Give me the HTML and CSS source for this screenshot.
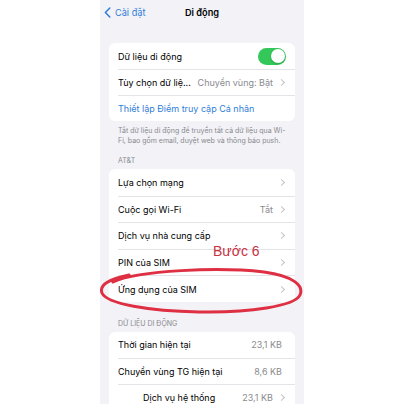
FILE: index.html
```html
<!DOCTYPE html>
<html lang="vi">
<head>
    <meta charset="UTF-8">
    <meta name="viewport" content="width=device-width, initial-scale=1.0">
    <title>Di động</title>
    <link rel="stylesheet" href="styles.css">
</head>
<body>

<div class="phone">
    <div class="nav">
        <div class="back">
            <svg width="7" height="11" viewBox="0 0 7 11"><path d="M5.8 1 L1.4 5.5 L5.8 10" fill="none" stroke="#2f7ed8" stroke-width="1.5" stroke-linecap="round" stroke-linejoin="round"/></svg>
            <span>Cài đặt</span>
        </div>
        <div class="title">Di động</div>
    </div>

    <div class="card first">
        <div class="row">
            <span class="label">Dữ liệu di động</span>
            <span class="toggle"><span class="knob"></span></span>
        </div>
        <div class="row">
            <span class="label">Tùy chọn dữ liệ...</span>
            <span class="value">Chuyển vùng: Bật</span>
            <span class="chev"></span>
        </div>
        <div class="row">
            <span class="label link">Thiết lập Điểm truy cập Cá nhân</span>
        </div>
    </div>
    <p class="footer">Tắt dữ liệu di động để truyền tất cả dữ liệu qua Wi-Fi, bao gồm email, duyệt web và thông báo push.</p>

    <div class="header">AT&amp;T</div>
    <div class="card tall">
        <div class="row">
            <span class="label">Lựa chọn mạng</span>
            <span class="chev"></span>
        </div>
        <div class="row">
            <span class="label">Cuộc gọi Wi-Fi</span>
            <span class="value">Tắt</span>
            <span class="chev"></span>
        </div>
        <div class="row">
            <span class="label">Dịch vụ nhà cung cấp</span>
            <span class="chev"></span>
        </div>
        <div class="row">
            <span class="label">PIN của SIM</span>
            <span class="chev"></span>
        </div>
        <div class="row">
            <span class="label">Ứng dụng của SIM</span>
            <span class="chev"></span>
        </div>
    </div>

    <div class="header second">DỮ LIỆU DI ĐỘNG</div>
    <div class="card">
        <div class="row">
            <span class="label">Thời gian hiện tại</span>
            <span class="value plain">23,1 KB</span>
        </div>
        <div class="row">
            <span class="label">Chuyển vùng TG hiện tại</span>
            <span class="value plain">8,6 KB</span>
        </div>
        <div class="row">
            <span class="label indent">Dịch vụ hệ thống</span>
            <span class="value">23,1 KB</span>
            <span class="chev"></span>
        </div>
    </div>

    <!-- chú thích vẽ tay -->
    <div class="note">Bước 6</div>
    <svg class="circle" width="206" height="50" viewBox="0 0 206 50">
        <path d="M14 16 C40 4 120 1 165 6 C195 10 205 20 201 29 C196 40 150 47 100 46 C50 45 8 38 3 27 C0 19 10 13 30 9" fill="none" stroke="#de2f43" stroke-width="3" stroke-linecap="round"/>
    </svg>
</div>

</body>
</html>
```

FILE: styles.css
```css
/* Màn hình cài đặt di động */
body {
    margin: 0;
    background-color: #fff;
    font-family: Inter, "Liberation Sans", sans-serif;
    color: #000;
}
.phone {
    position: relative;
    width: 204px;
    height: 404px;
    margin: 0 auto;
    background-color: #f2f2f7;
    overflow: hidden;
}
.nav {
    position: relative;
    height: 24px;
    display: flex;
    align-items: center;
    justify-content: center;
    margin-bottom: 19px;
}
.back {
    position: absolute;
    left: 4px;
    top: 0;
    height: 24px;
    display: flex;
    align-items: center;
    gap: 4px;
    color: #2f7ed8;
    font-size: 9.2px;
}
.title {
    font-size: 9.2px;
    font-weight: 600;
}
.card {
    margin: 0 9px;
    background-color: #fff;
    border-radius: 6px;
}
.row {
    height: 26px;
    display: flex;
    align-items: center;
    margin-left: 9px;
    padding-right: 9px;
    border-top: 0.6px solid #e3e3e8;
    box-sizing: border-box;
    font-size: 9px;
}
.row:first-child {
    border-top: none;
}
.tall .row {
    height: 26.6px;
}
.label {
    flex: 1;
    white-space: nowrap;
}
.label.link {
    color: #2f7ed8;
}
.label.indent {
    padding-left: 25px;
}
.value {
    color: #8a8a8e;
    margin-right: 6px;
}
.value.plain {
    margin-right: 4px;
}
.chev {
    width: 4px;
    height: 4px;
    border-top: 1px solid #c4c4c8;
    border-right: 1px solid #c4c4c8;
    transform: rotate(45deg);
    margin-right: 2px;
}
.toggle {
    width: 28px;
    height: 17px;
    border-radius: 9px;
    background-color: #34c759;
    position: relative;
}
.knob {
    position: absolute;
    right: 1.5px;
    top: 1.5px;
    width: 14px;
    height: 14px;
    border-radius: 50%;
    background-color: #fff;
    box-shadow: 0 1px 2px rgba(0, 0, 0, 0.2);
}
.footer {
    margin: 5px 0 0;
    padding: 0 14px 0 18px;
    font-size: 7px;
    line-height: 10px;
    color: #8a8a8e;
}
.header {
    margin-top: 10px;
    margin-bottom: 3px;
    padding-left: 18px;
    font-size: 7px;
    line-height: 10px;
    color: #8a8a8e;
}
.header.second {
    margin-top: 17px;
}
.note {
    position: absolute;
    left: 113px;
    top: 243px;
    font-family: "Liberation Sans", sans-serif;
    font-size: 14px;
    color: #c8303f;
}
.circle {
    position: absolute;
    left: -1px;
    top: 266px;
}
```
